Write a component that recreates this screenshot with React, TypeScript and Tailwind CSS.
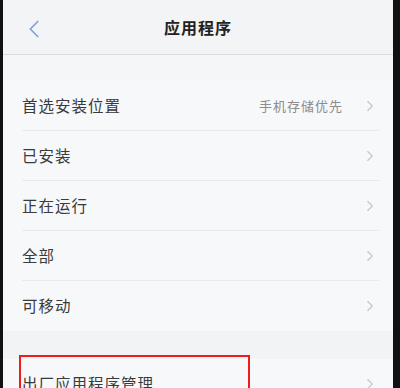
import { ChevronLeft, ChevronRight } from 'lucide-react'

const rows = [
  { label: '首选安装位置', value: '手机存储优先' },
  { label: '已安装' },
  { label: '正在运行' },
  { label: '全部' },
  { label: '可移动' },
]

function Row({ label, value, last }: { label: string; value?: string; last?: boolean }) {
  return (
    <div className="flex h-[50px] items-center pl-[19px] pr-[14px]">
      <div className={`flex h-full flex-1 items-center ${last ? '' : 'border-b border-[#e9eaec]'}`}>
        <span className="flex-1 text-[15.5px] tracking-[1px] text-[#3a3a3a]">{label}</span>
        {value && <span className="mr-[18px] text-[13px] tracking-[1px] text-[#8c8c8c]">{value}</span>}
        <ChevronRight className="h-[18px] w-[18px] text-[#c4c6c9]" strokeWidth={1.5} />
      </div>
    </div>
  )
}

export default function App() {
  return (
    <div
      className="flex h-[388px] w-[400px] overflow-hidden bg-[#111]"
      style={{ fontFamily: '"Noto Sans CJK SC", "Noto Sans", sans-serif' }}
    >
      <div className="ml-[3px] flex w-[390px] flex-col bg-[#f5f6f7]">
        <header className="relative flex h-[55px] shrink-0 items-center justify-center border-b border-[#dcdddf] bg-[#f3f4f5]">
          <ChevronLeft
            className="absolute left-[16px] top-[14px] h-[30px] w-[30px] text-[#7f9fe0]"
            strokeWidth={1.4}
          />
          <h1 className="text-[16px] font-bold tracking-[1px] text-[#222]">应用程序</h1>
        </header>

        <div className="h-[26px] shrink-0" />
        <div className="shrink-0 bg-[#f7f8f9]">
          {rows.map((r, i) => (
            <Row key={r.label} label={r.label} value={r.value} last={i === rows.length - 1} />
          ))}
        </div>

        <div className="h-[28px] shrink-0 bg-[#f2f3f4]" />
        <div className="relative shrink-0 bg-[#f7f8f9]">
          <Row label="出厂应用程序管理" />
          <div className="absolute left-[16px] top-[-4px] h-[50px] w-[231px] border-2 border-[#ee1c1c]" />
        </div>
      </div>
    </div>
  )
}
